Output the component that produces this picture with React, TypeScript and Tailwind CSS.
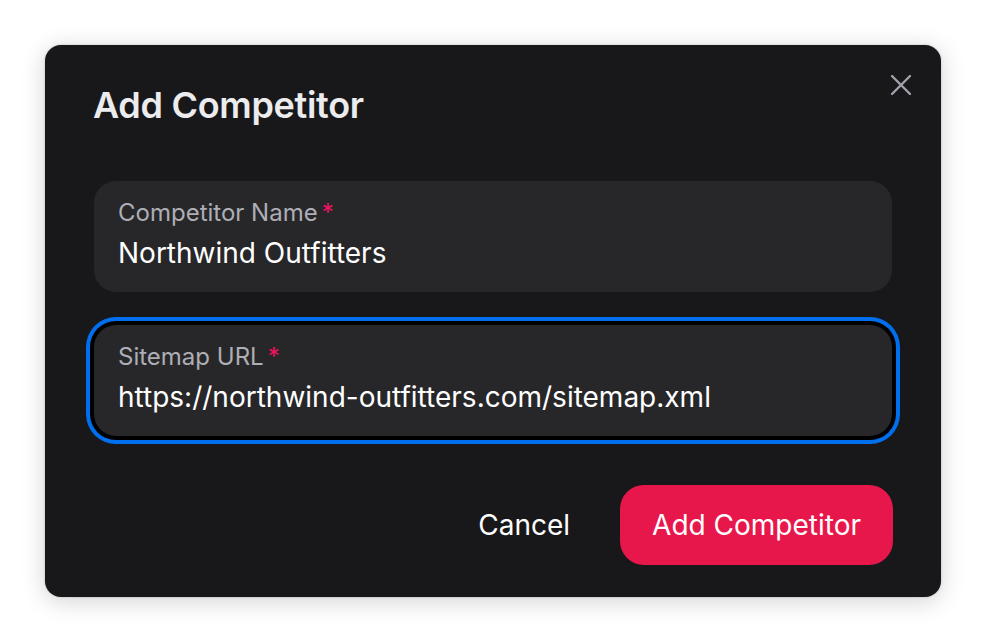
import React from "react";

export default function App() {
  return (
    <div
      className="w-[986px] h-[642px] bg-white pt-[45px] pl-[45px]"
      style={{ fontFamily: "Inter, 'Noto Sans', sans-serif" }}
    >
      <div className="relative w-[896px] h-[552px] bg-[#18181b] rounded-[16px] shadow-[0_4px_24px_rgba(0,0,0,0.18),0_0_2px_rgba(0,0,0,0.25)] flex flex-col">
        <button className="absolute top-[20px] right-[20px] w-[40px] h-[40px] flex items-center justify-center text-[#a1a1aa]">
          <svg width="20" height="20" viewBox="0 0 20 20" fill="none">
            <path d="M1 1L19 19M19 1L1 19" stroke="currentColor" strokeWidth="2.4" strokeLinecap="round" />
          </svg>
        </button>

        <div className="pl-[48px] pr-[49px] pt-[32px] pb-[32px]">
          <h2 className="text-[36px] leading-[56px] font-semibold text-[#ececee] tracking-[-0.3px]">
            Add Competitor
          </h2>
        </div>

        <div className="px-[49px] py-[16px] flex flex-col gap-[33px]">
          <div className="h-[111px] rounded-[22px] bg-[#27272a] pl-[24px] pt-[16px]">
            <div className="h-[32px] text-[24px] leading-[32px] text-[#aeaeb5] flex">
              Competitor Name<span className="text-[#f31260] ml-[4px]">*</span>
            </div>
            <div className="mt-[6px] h-[36px] text-[28px] leading-[36px] text-white">
              Northwind Outfitters
            </div>
          </div>

          <div className="h-[111px] rounded-[22px] bg-[#27272a] pl-[24px] pt-[16px] ring-4 ring-[#006FEE] ring-offset-4 ring-offset-black">
            <div className="h-[32px] text-[24px] leading-[32px] text-[#aeaeb5] flex">
              Sitemap URL<span className="text-[#f31260] ml-[4px]">*</span>
            </div>
            <div className="mt-[6px] h-[36px] text-[28px] leading-[36px] text-white">
              https://northwind-outfitters.com/sitemap.xml
            </div>
          </div>
        </div>

        <div className="px-[48px] pt-[33px] flex justify-end items-center gap-[18px]">
          <button className="h-[80px] px-[32px] rounded-[24px] text-[28px] text-white">
            Cancel
          </button>
          <button className="h-[80px] px-[32px] rounded-[24px] text-[28px] text-white bg-[#e8174b]">
            Add Competitor
          </button>
        </div>
      </div>
    </div>
  );
}
